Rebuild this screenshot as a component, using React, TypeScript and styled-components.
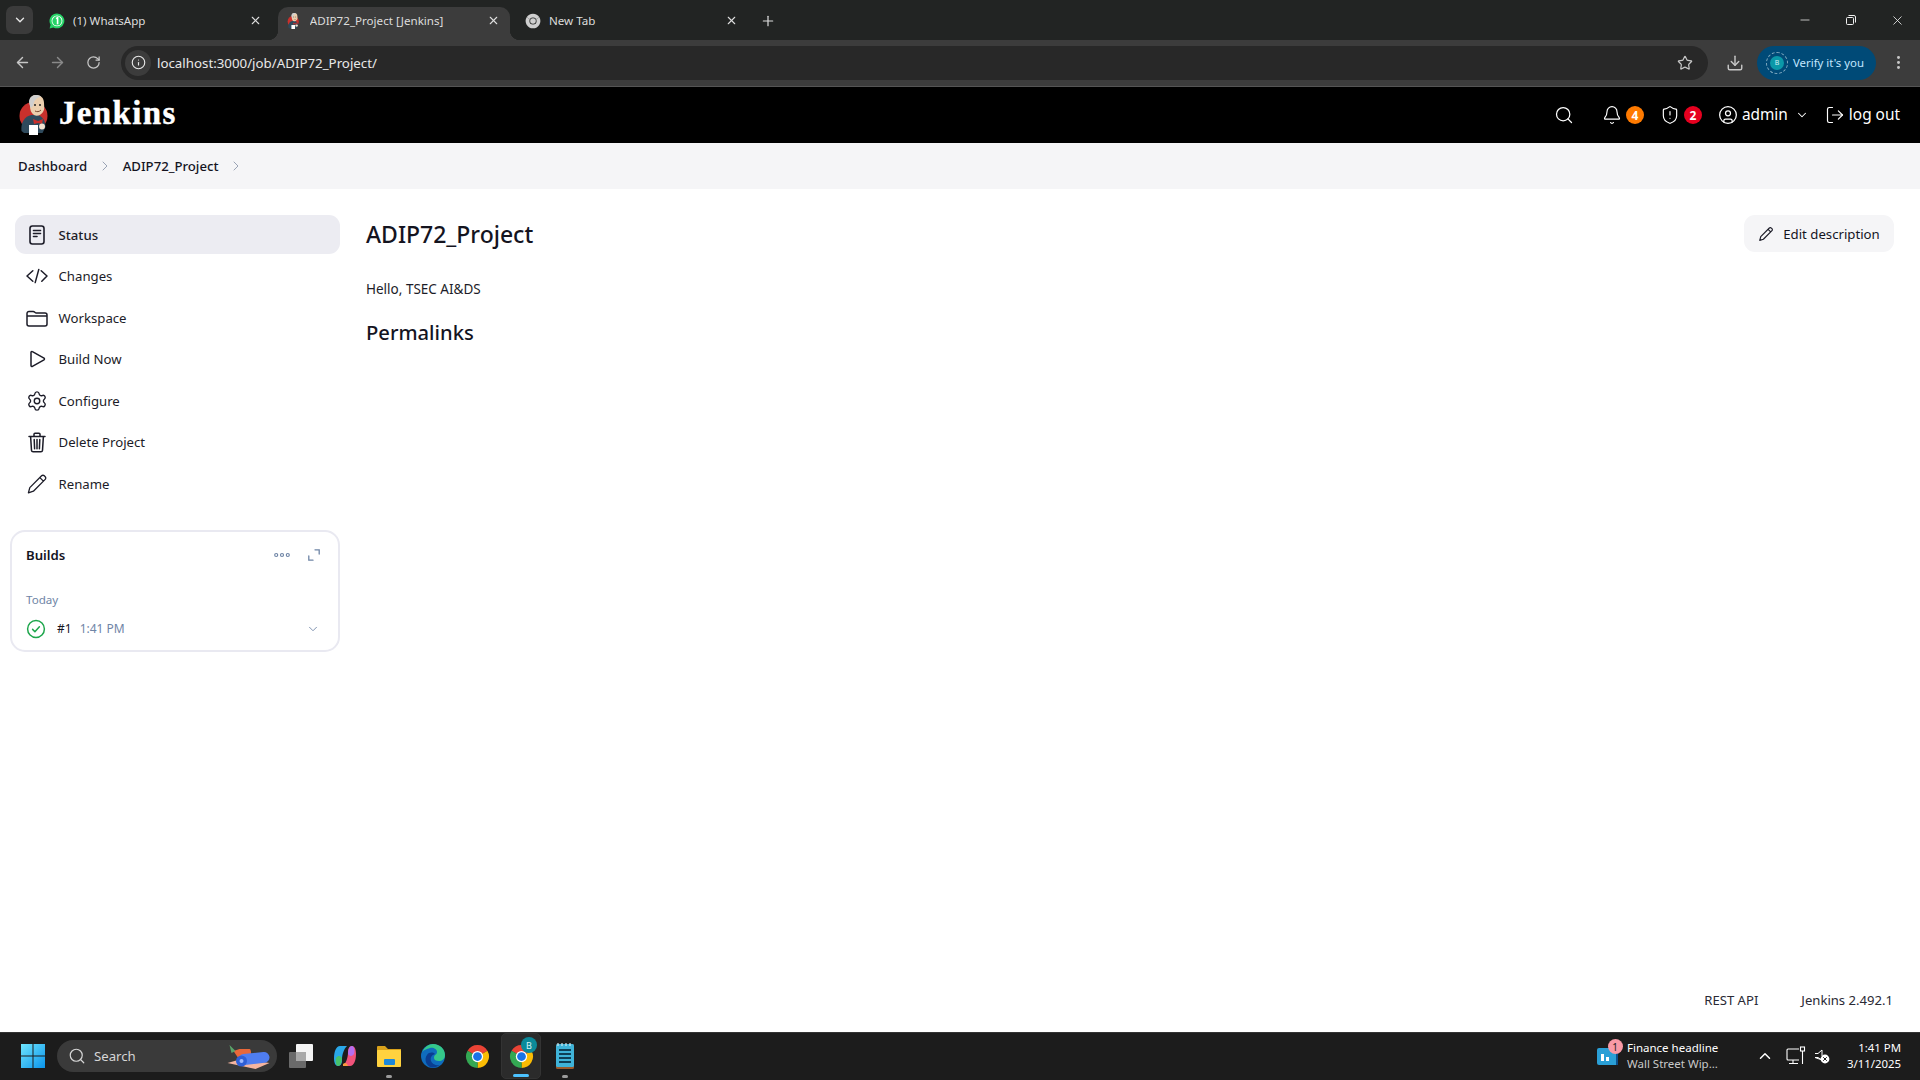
import React from "react";
import styled, { createGlobalStyle } from "styled-components";
import {
  Search, Bell, ShieldAlert, CircleUser, ChevronDown, LogOut, ChevronRight, Settings,
  ArrowLeft, ArrowRight, RotateCw, Info, Star, Download, EllipsisVertical, X, Plus, Minus, ChevronUp,
} from "lucide-react";

const UI = `"Noto Sans", "Open Sans", "Liberation Sans", sans-serif`;

const Global = createGlobalStyle`
  html, body { margin: 0; padding: 0; height: 100%; overflow: hidden; background: #fff; }
  #root { height: 100%; }
  * { box-sizing: border-box; }
  svg { display: block; flex: none; }
`;

const Page = styled.div`
  height: 100vh; display: flex; flex-direction: column; font-family: ${UI}; color: #14141f;
`;

/* ---------- browser chrome ---------- */
const TabStrip = styled.div`
  height: 40px; flex: none; background: #222423; display: flex; align-items: flex-end; padding-left: 6px; color: #dedede;
`;
const TabListButton = styled.div`
  width: 27px; height: 28px; margin: 0 7px 6px 0; background: #3b3b3b; border-radius: 7px;
  display: flex; align-items: center; justify-content: center; color: #e6e6e6;
`;
const Tab = styled.div<{ $active?: boolean }>`
  position: relative; width: ${(p) => (p.$active ? 232 : 238)}px; margin-right: ${(p) => (p.$active ? 6 : 0)}px; height: 33px;
  display: flex; align-items: center; padding: 0 ${(p) => (p.$active ? 10 : 16)}px 6px 9px; gap: ${(p) => (p.$active ? 10 : 8)}px;
  border-radius: 10px 10px 0 0; background: ${(p) => (p.$active ? "#3c3c3c" : "transparent")};
  ${(p) => p.$active && `
    &::before, &::after { content: ""; position: absolute; bottom: 0; width: 10px; height: 10px; }
    &::before { left: -10px; background: radial-gradient(circle at 0 0, #222423 10px, #3c3c3c 10.5px); }
    &::after { right: -10px; background: radial-gradient(circle at 100% 0, #222423 10px, #3c3c3c 10.5px); }
  `}
`;
const TabTitle = styled.span`
  flex: 1; font-size: 11.6px; white-space: nowrap; overflow: hidden; color: #dcdcdc;
`;
const NewTab = styled.div`
  margin: 0 0 11px 6px; color: #dedede; display: flex;
`;
const WindowControls = styled.div`
  margin-left: auto; align-self: stretch; display: flex; align-items: center; color: #f0f0f0;
`;
const WindowButton = styled.div`
  width: 46px; height: 40px; display: flex; align-items: center; justify-content: center;
`;
const Toolbar = styled.div`
  height: 47px; flex: none; background: #3c3c3c; border-bottom: 1px solid #555; display: flex; align-items: center;
  padding: 0 0 1px 13px; color: #c7c7c7;
`;
const NavButton = styled.div<{ $dim?: boolean }>`
  width: 18px; margin-right: 17.5px; display: flex; justify-content: center; color: ${(p) => (p.$dim ? "#8a8a8a" : "#c7c7c7")};
`;
const AddressBar = styled.div`
  flex: 1; height: 34px; margin-left: 1.5px; background: #282828; border-radius: 17px; display: flex; align-items: center;
  padding: 0 15px 0 4px; color: #e8e8e8;
`;
const SiteInfo = styled.div`
  width: 26px; height: 26px; border-radius: 50%; background: #3c3c3c; display: flex; align-items: center; justify-content: center;
  margin-right: 6px;
`;
const Url = styled.span`
  font-size: 13.3px; flex: 1; color: #e8e8e8;
`;
const ToolActions = styled.div`
  width: 212px; flex: none; display: flex; align-items: center; padding-left: 18px;
`;
const VerifyPill = styled.div`
  width: 119px; height: 34px; margin-left: 13px; border-radius: 17px; background: #004a77; color: #c2e7ff; display: flex; align-items: center;
  gap: 6px; padding-left: 10px; font-size: 11.4px; white-space: nowrap;
`;
const ProfileDot = styled.span`
  width: 20px; height: 20px; border-radius: 50%; background: #0b98a8; border: 3px solid #004a77; outline: 1px dashed #7fa9c0;
  color: #cfeff2; font-size: 7px; display: flex; align-items: center; justify-content: center; flex: none;
`;
const MenuDots = styled.div`
  margin-left: 14px; color: #c7c7c7;
`;

/* ---------- jenkins header ---------- */
const Header = styled.header`
  height: 56px; flex: none; background: #000; color: #fff; display: flex; align-items: center; padding: 0 20px 0 18px;
`;
const Brand = styled.div`
  display: flex; align-items: center; gap: 9px;
`;
const BrandName = styled.span`
  font-family: "Liberation Serif", serif; font-weight: 700; font-size: 33px; letter-spacing: 1.35px; color: #fff; line-height: 1;
  -webkit-text-stroke: 0.4px #fff; padding-bottom: 3px;
`;
const HeaderActions = styled.div`
  margin-left: auto; display: flex; align-items: center;
`;
const HeaderIconGroup = styled.div<{ $gap?: number }>`
  display: flex; align-items: center; margin-left: ${(p) => p.$gap ?? 0}px; gap: 4px;
`;
const Badge = styled.span<{ $color: string }>`
  width: 18px; height: 18px; border-radius: 50%; background: ${(p) => p.$color}; color: #fff; font-size: 12px; font-weight: 700;
  display: flex; align-items: center; justify-content: center;
`;
const HeaderText = styled.span`
  font-size: 15.4px; line-height: 1; color: #fff;
`;

const Crumbs = styled.nav`
  height: 46px; flex: none; background: #f5f5f7; display: flex; align-items: center; padding-left: 18px; font-weight: 500; color: #14141f;
`;
const Crumb = styled.span`
  font-size: 13.2px;
`;
const CrumbSep = styled.span`
  color: #9aa3b5; margin: 0 10px 0 9.5px; display: flex;
`;

/* ---------- main ---------- */
const Main = styled.main`
  flex: 1; display: flex; padding: 26px 26px 0 15px; min-height: 0;
`;
const Side = styled.aside`
  width: 325px; flex: none; display: flex; flex-direction: column;
`;
const TaskList = styled.div`
  display: flex; flex-direction: column; gap: 2.6px;
`;
const Task = styled.div<{ $active?: boolean }>`
  height: 39px; border-radius: 11px; display: flex; align-items: center; gap: 10.5px; padding-left: 11px;
  background: ${(p) => (p.$active ? "#ececf2" : "transparent")}; font-size: 13.2px; font-weight: ${(p) => (p.$active ? 500 : 400)};
  color: #1c1c28;
`;
const BuildCard = styled.section`
  margin: 26px 0 0 -5px; width: 330px; height: 122px; border: 2px solid #e9e9f1; border-radius: 15px; padding: 0 14px;
  display: flex; flex-direction: column;
`;
const CardHead = styled.div`
  height: 46px; display: flex; align-items: center; gap: 18px; padding-right: 4px; color: #6f85a6;
`;
const CardTitle = styled.h2`
  margin: 0 auto 0 0; font-size: 13.2px; font-weight: 600; color: #14141f;
`;
const Today = styled.div`
  margin-top: 13px; font-size: 11.6px; line-height: 18px; color: #6f85a6;
`;
const BuildRow = styled.div`
  margin-top: 10px; display: flex; align-items: center; font-size: 12px; padding-right: 4px;
`;
const BuildNum = styled.span`
  margin-left: 11px; color: #14141f;
`;
const BuildTime = styled.span`
  margin: 0 auto 0 8px; color: #6f85a6;
`;
const Content = styled.div`
  flex: 1; margin-left: 26px;
`;
const TitleRow = styled.div`
  height: 37px; display: flex; align-items: center; justify-content: space-between;
`;
const Title = styled.h1`
  margin: 0; padding-top: 2px; font-size: 23px; font-weight: 500; color: #14141f; line-height: 1;
`;
const EditButton = styled.div`
  width: 150px; height: 37px; border-radius: 11px; background: #f5f5f7; display: flex; align-items: center; justify-content: center; gap: 9px;
  font-size: 13.2px; color: #14141f;
`;
const Description = styled.p`
  margin: 27px 0 0; font-size: 13.5px; line-height: 20px; color: #1c1c28;
`;
const SubTitle = styled.h2`
  margin: 18px 0 0; font-size: 20.2px; font-weight: 500; line-height: 30px; color: #14141f;
`;
const Footer = styled.footer`
  height: 62px; flex: none; display: flex; align-items: center; justify-content: flex-end; gap: 43px; padding: 0 27px 2px 0; font-size: 13.1px; color: #2a2a35;
`;

/* ---------- taskbar ---------- */
const Taskbar = styled.div`
  height: 48px; flex: none; background: #1c1c1c; border-top: 1px solid #333; display: flex; align-items: center; padding: 0 0 1px 21px; color: #fff;
`;
const SearchPill = styled.div`
  width: 220px; height: 32px; margin-left: 12px; border-radius: 16px; background: #3a3a3a; display: flex; align-items: center; padding: 0 4px 0 11px; gap: 8px;
  font-size: 13.2px; color: #d6d6d6;
`;
const SearchLabel = styled.span`
  flex: 1;
`;
const TaskApps = styled.div`
  display: flex; align-items: center; margin-left: 2px;
`;
const AppSlot = styled.div<{ $w?: number; $active?: boolean }>`
  position: relative; width: ${(p) => p.$w ?? 44}px; height: 46px; display: flex; align-items: center; justify-content: center;
  ${(p) => p.$active && `background: #2b2b2b; border-radius: 5px; border: 1px solid #333; margin-left: 2px;`}
`;
const RunDot = styled.span<{ $active?: boolean }>`
  position: absolute; bottom: 1px; left: 50%; transform: translateX(-50%); height: 3px; border-radius: 2px;
  width: ${(p) => (p.$active ? 16 : 6)}px; background: ${(p) => (p.$active ? "#4cc2ff" : "#9b9b9b")};
`;
const AppBadge = styled.span`
  position: absolute; top: 3px; right: 3px; width: 16px; height: 16px; border-radius: 50%; background: #0b8a9a; color: #d8f4f7;
  font-size: 9px; display: flex; align-items: center; justify-content: center;
`;
const Tray = styled.div`
  margin-left: auto; display: flex; align-items: center; padding-right: 19px;
`;
const Widget = styled.div`
  position: relative; display: flex; align-items: center; gap: 8px; width: 159px;
`;
const WidgetBadge = styled.span`
  position: absolute; left: 10.5px; top: -1px; width: 15px; height: 15px; border-radius: 50%; background: #f99aa6; color: #1c1c1c; font-size: 10px;
  display: flex; align-items: center; justify-content: center;
`;
const WidgetText = styled.div`
  display: flex; flex-direction: column; font-size: 11.5px; line-height: 16px; white-space: nowrap; color: #fff;
`;
const WidgetSub = styled.span`
  color: #c9c9c9;
`;
const TrayIcons = styled.div`
  display: flex; align-items: center; gap: 8px; color: #fff;
`;
const Caret = styled.span`
  margin-right: 4px; display: flex;
`;
const Clock = styled.div`
  width: 71px; text-align: right; font-size: 11.4px; line-height: 16px; color: #fff; white-space: nowrap;
`;

/* ---------- drawings ---------- */
const JenkinsLogo = ({ size = 34 }: { size?: number }) => (
  <svg width={size * 0.8} height={size} viewBox="0 0 32 40">
    <circle cx="15.5" cy="21" r="14" fill="#c9302c" />
    <path d="M3.5 36c-1-8 3-15 10-16h6c5 1 8 6 8 12l-3 6H6z" fill="#2f4a5c" />
    <path d="M12 5c0-3 3-5 6-5 5 0 8 3 8 8 0 3 1 6-1 9-2 3-6 5-9 3-3-2-4-5-4-9z" fill="#eccfae" />
    <path d="M11 7c0-4 3-7 7-7 2 0 4 .5 5 2-3 0-6 2-7 5l-1 4-2 2c-1-2-2-4-2-6z" fill="#cfcfcf" />
    <path d="M15 24l5 2 5-2-1 5-4-1-4 1z" fill="#c9302c" />
    <path d="M11 30h9v10h-9z" fill="#fff" />
    <circle cx="24" cy="31.5" r="3" fill="#f0e2cf" />
    <circle cx="17" cy="10" r="1" fill="#222" /><circle cx="22" cy="10" r="1" fill="#222" />
    <path d="M17 16c2 1 4 1 6-1" stroke="#7a4b33" strokeWidth="1" fill="none" />
  </svg>
);
const ChromeLogo = ({ size = 16, ring = false }: { size?: number; ring?: boolean }) => (
  <svg width={size} height={size} viewBox="0 0 24 24">
    <path d="M12 12L2.47 6.5A11 11 0 0 1 21.53 6.5z" fill={ring ? "#cfcfcf" : "#ea4335"} />
    <path d="M12 12L21.53 6.5A11 11 0 0 1 12 23z" fill={ring ? "#cfcfcf" : "#fbbc04"} />
    <path d="M12 12L12 23A11 11 0 0 1 2.47 6.5z" fill={ring ? "#cfcfcf" : "#34a853"} />
    <circle cx="12" cy="12" r="5.4" fill={ring ? "#222423" : "#fff"} />
    <circle cx="12" cy="12" r="4.2" fill={ring ? "#cfcfcf" : "#1a73e8"} />
  </svg>
);
const WhatsAppLogo = () => (
  <svg width="16" height="16" viewBox="0 0 16 16">
    <path d="M8 .5a7.4 7.4 0 0 0-6.4 11.2L.6 15.4l3.8-1A7.4 7.4 0 1 0 8 .5z" fill="#25d366" />
    <circle cx="8" cy="7.9" r="5.4" fill="#fff" />
    <circle cx="8" cy="7.9" r="4.6" fill="#25d366" />
    <path d="M7 5.6l1.6-1v6.6" stroke="#fff" strokeWidth="1.6" fill="none" />
  </svg>
);
const StatusIcon = () => (
  <svg width="22" height="22" viewBox="0 0 22 22" fill="none" stroke="#1c1c28" strokeWidth="1.6" strokeLinecap="round" strokeLinejoin="round">
    <rect x="4" y="2" width="14" height="18" rx="2.4" />
    <path d="M7.5 6.5h7M7.5 9.5h7M7.5 12.5h3.5" />
  </svg>
);
const CodeIcon = () => (
  <svg width="22" height="22" viewBox="0 0 22 22" fill="none" stroke="#1c1c28" strokeWidth="1.5" strokeLinecap="round" strokeLinejoin="round">
    <path d="M6.8 5.8L1 11l5.8 5.2M15.2 5.8L21 11l-5.2 5.2M12.8 4.4L9.2 17.6" />
  </svg>
);
const FolderIcon = () => (
  <svg width="22" height="22" viewBox="0 0 22 22" fill="none" stroke="#1c1c28" strokeWidth="1.5" strokeLinejoin="round">
    <path d="M1 6.4A2 2 0 0 1 3 4.4h4.2c1.6 0 1.6 1.6 3.2 1.6H19a2 2 0 0 1 2 2V17a2 2 0 0 1-2 2H3a2 2 0 0 1-2-2z" />
    <path d="M1 9h20" />
  </svg>
);
const PlayIcon = () => (
  <svg width="22" height="22" viewBox="0 0 22 22" fill="none" stroke="#1c1c28" strokeWidth="1.5" strokeLinejoin="round">
    <path d="M5 4.4c0-.8.8-1.2 1.4-.8l11.6 6.6c.6.4.6 1.2 0 1.6L6.4 18.4c-.6.4-1.4 0-1.4-.8z" />
  </svg>
);
const TrashIcon = () => (
  <svg width="22" height="22" viewBox="0 0 22 22" fill="none" stroke="#1c1c28" strokeWidth="1.5" strokeLinecap="round" strokeLinejoin="round">
    <path d="M4.6 5.4l.9 14a1.6 1.6 0 0 0 1.6 1.4h7.8a1.6 1.6 0 0 0 1.6-1.4l.9-14M3 5.4h16M8 5.4V3.2a1 1 0 0 1 1-1h4a1 1 0 0 1 1 1v2.2M8.2 8.6l.4 9.2M11 8.6v9.2M13.8 8.6l-.4 9.2" />
  </svg>
);
const PencilIcon = ({ size = 22 }: { size?: number }) => (
  <svg width={size} height={size} viewBox="0 0 22 22" fill="none" stroke="#1c1c28" strokeWidth={size < 20 ? 1.6 : 1.3} strokeLinecap="round" strokeLinejoin="round">
    <path d="M2.4 19.8l1.4-5.2L15.6 2.8a1.9 1.9 0 0 1 2.7 0l.9.9a1.9 1.9 0 0 1 0 2.7L7.4 18.2zM13.9 4.6l3.5 3.5" />
  </svg>
);
const CheckBadge = () => (
  <svg width="20" height="20" viewBox="0 0 20 20" fill="none" stroke="#1ea64c" strokeWidth="1.5" strokeLinecap="round" strokeLinejoin="round">
    <circle cx="10" cy="10" r="8.4" />
    <path d="M6.6 10.4l2.3 2.3 4.5-5" />
  </svg>
);
const Dots = () => (
  <svg width="16" height="6" viewBox="0 0 16 6" fill="none" stroke="#6f85a6" strokeWidth="1.2">
    <circle cx="2.2" cy="3" r="1.5" /><circle cx="8" cy="3" r="1.5" /><circle cx="13.8" cy="3" r="1.5" />
  </svg>
);
const Expand = () => (
  <svg width="12" height="12" viewBox="0 0 12 12" fill="none" stroke="#6f85a6" strokeWidth="1.3" strokeLinecap="round">
    <path d="M7 .8h4.2V5M.8 7v4.2H5" />
  </svg>
);
const RestoreIcon = () => (
  <svg width="10" height="10" viewBox="0 0 10 10" fill="none" stroke="currentColor" strokeWidth="1">
    <rect x=".5" y="2.5" width="7" height="7" rx="1" />
    <path d="M2.5 .5H8a1.5 1.5 0 0 1 1.5 1.5v5.5" />
  </svg>
);
const WinLogo = () => (
  <svg width="24" height="24" viewBox="0 0 24 24">
    <defs>
      <linearGradient id="win" x1="0" y1="0" x2="1" y2="1"><stop offset="0" stopColor="#6fe6ff" /><stop offset="1" stopColor="#0a93ea" /></linearGradient>
    </defs>
    <path d="M0 0h11.5v11.5H0zM12.5 0H24v11.5H12.5zM0 12.5h11.5V24H0zM12.5 12.5H24V24H12.5z" fill="url(#win)" />
  </svg>
);
const SearchArt = () => (
  <svg width="49" height="30" viewBox="0 0 46 30">
    <path d="M2 22l14-4 28 4-14 6z" fill="#f5b5a0" />
    <path d="M8 10l6-2h10c2 0 2 8 0 8H12z" fill="#e8683a" />
    <path d="M4 4l6 6-4 2z" fill="#5aa56a" />
    <rect x="13" y="12" width="31" height="11" rx="5.5" fill="#4f7df0" transform="rotate(-6 28 17)" />
    <circle cx="16" cy="20" r="5.5" fill="#2f5fd6" />
    <circle cx="16" cy="20" r="2" fill="#9db8ff" />
  </svg>
);
const TaskViewIcon = () => (
  <svg width="24" height="24" viewBox="0 0 24 24">
    <rect x="0" y="8" width="17" height="16" rx="1" fill="#6a6a6a" />
    <rect x="7" y="0" width="17" height="17" rx="1" fill="#f4f4f4" />
    <rect x="7" y="8" width="10" height="9" fill="#a9a9a9" />
  </svg>
);
const CopilotIcon = () => (
  <svg width="22" height="24" viewBox="0 0 22 24">
    <path d="M6 2h7c-3 3-5 8-5 14 0 3-1 6-4 6-3 0-4-4-4-8C0 8 2 2 6 2z" fill="#2aa7e8" />
    <path d="M2 14c2-3 5-2 6 0 0 3-1 8-4 8-2 0-3-4-2-8z" fill="#47c26b" />
    <path d="M16 22H9c3-3 5-8 5-14 0-3 1-6 4-6 3 0 4 4 4 8 0 6-2 12-6 12z" fill="#f0527a" />
    <path d="M20 10c-2 3-5 2-6 0 0-3 1-8 4-8 2 0 3 4 2 8z" fill="#b56ef0" />
    <path d="M9 20c2-2 4-1 5 2H9z" fill="#f79a3e" />
  </svg>
);
const ExplorerIcon = () => (
  <svg width="24" height="24" viewBox="0 0 24 24">
    <path d="M0 3a1 1 0 0 1 1-1h7l3 3h13v3H0z" fill="#d9a21b" />
    <rect x="0" y="6" width="24" height="17" rx="1" fill="#ffd23f" />
    <rect x="7" y="15" width="11" height="6" rx="1" fill="#1e88d8" />
  </svg>
);
const EdgeIcon = () => (
  <svg width="24" height="24" viewBox="0 0 24 24">
    <circle cx="12" cy="12" r="12" fill="#0f6cbd" />
    <path d="M1 9C3 3 8 0 12 0c7 0 12 5 12 11 0 4-3 6-6 6-3 0-5-1-5-3 0-4 3-3 3-6S12 3 9 4 2 6 1 9z" fill="#35c88a" />
    <path d="M9 23c-4-2-6-8-3-12 2-3 6-3 8-1-3 1-5 3-4 7 1 3 5 5 9 4-3 2-7 3-10 2z" fill="#0a3d91" />
  </svg>
);
const NotepadIcon = () => (
  <svg width="18" height="26" viewBox="0 0 18 26">
    <rect x="0" y="1" width="18" height="25" rx="1.5" fill="#9a5a2c" />
    <rect x="0" y="1" width="18" height="23" rx="1.5" fill="#3fb3d8" />
    <path d="M3 7h12M3 11h12M3 15h12M3 19h12" stroke="#0e3f56" strokeWidth="1.8" />
    <path d="M2 0v3M6 0v3M10 0v3M14 0v3" stroke="#cfe9f2" strokeWidth="1.2" />
  </svg>
);
const WidgetIcon = () => (
  <svg width="22" height="22" viewBox="0 0 22 22">
    <rect x="0" y="3" width="21" height="17" rx="2" fill="#2a9fd6" />
    <path d="M4 9v7h3V9zM9 12v4h3v-4z" fill="#fff" />
    <rect x="19" y="8" width="2" height="12" fill="#0d4e8a" />
  </svg>
);
const NetworkIcon = () => (
  <svg width="20" height="20" viewBox="0 0 20 20" fill="none" stroke="#fff" strokeWidth="1.1">
    <path d="M13 3H2a1 1 0 0 0-1 1v9a1 1 0 0 0 1 1h11M7 14v3M3 17.5h9" />
    <rect x="14.5" y="1" width="4" height="4" /><path d="M16.5 5v13" />
  </svg>
);
const MuteIcon = () => (
  <svg width="16" height="16" viewBox="0 0 16 16">
    <path d="M1 5.5h3L8 2v6M8 12L4 9.5H1z" fill="none" stroke="#fff" strokeWidth="1" />
    <circle cx="11" cy="11" r="4.4" fill="#fff" />
    <path d="M9.2 9.2l3.6 3.6M12.8 9.2l-3.6 3.6" stroke="#1c1c1c" strokeWidth="1" />
  </svg>
);

const tasks: { label: string; icon: React.ReactNode; active?: boolean }[] = [
  { label: "Status", icon: <StatusIcon />, active: true },
  { label: "Changes", icon: <CodeIcon /> },
  { label: "Workspace", icon: <FolderIcon /> },
  { label: "Build Now", icon: <PlayIcon /> },
  { label: "Configure", icon: <Settings size={22} strokeWidth={1.5} /> },
  { label: "Delete Project", icon: <TrashIcon /> },
  { label: "Rename", icon: <PencilIcon /> },
];

export default function App() {
  return (
    <Page>
      <Global />
      <TabStrip>
        <TabListButton><ChevronDown size={14} strokeWidth={2.4} /></TabListButton>
        <Tab>
          <WhatsAppLogo />
          <TabTitle>(1) WhatsApp</TabTitle>
          <X size={13} strokeWidth={2} />
        </Tab>
        <Tab $active>
          <JenkinsLogo size={16} />
          <TabTitle>ADIP72_Project [Jenkins]</TabTitle>
          <X size={13} strokeWidth={2} />
        </Tab>
        <Tab>
          <ChromeLogo ring />
          <TabTitle>New Tab</TabTitle>
          <X size={13} strokeWidth={2} />
        </Tab>
        <NewTab><Plus size={16} strokeWidth={1.8} /></NewTab>
        <WindowControls>
          <WindowButton><Minus size={14} strokeWidth={1.3} /></WindowButton>
          <WindowButton><RestoreIcon /></WindowButton>
          <WindowButton><X size={15} strokeWidth={1.3} /></WindowButton>
        </WindowControls>
      </TabStrip>
      <Toolbar>
        <NavButton><ArrowLeft size={17} strokeWidth={2} /></NavButton>
        <NavButton $dim><ArrowRight size={17} strokeWidth={2} /></NavButton>
        <NavButton><RotateCw size={15} strokeWidth={2} /></NavButton>
        <AddressBar>
          <SiteInfo><Info size={15} strokeWidth={1.8} /></SiteInfo>
          <Url>localhost:3000/job/ADIP72_Project/</Url>
          <Star size={16} strokeWidth={1.8} color="#c7c7c7" />
        </AddressBar>
        <ToolActions>
          <Download size={18} strokeWidth={1.9} />
          <VerifyPill><ProfileDot>B</ProfileDot>Verify it's you</VerifyPill>
          <MenuDots><EllipsisVertical size={17} strokeWidth={2.2} /></MenuDots>
        </ToolActions>
      </Toolbar>

      <Header>
        <Brand>
          <JenkinsLogo size={40} />
          <BrandName>Jenkins</BrandName>
        </Brand>
        <HeaderActions>
          <Search size={20} strokeWidth={1.5} />
          <HeaderIconGroup $gap={28}>
            <Bell size={20} strokeWidth={1.4} />
            <Badge $color="#ff7a00">4</Badge>
          </HeaderIconGroup>
          <HeaderIconGroup $gap={16}>
            <ShieldAlert size={20} strokeWidth={1.4} />
            <Badge $color="#e6001f">2</Badge>
          </HeaderIconGroup>
          <HeaderIconGroup $gap={16}>
            <CircleUser size={20} strokeWidth={1.5} />
            <HeaderText>admin</HeaderText>
          </HeaderIconGroup>
          <HeaderIconGroup $gap={7}><ChevronDown size={14} strokeWidth={1.8} /></HeaderIconGroup>
          <HeaderIconGroup $gap={16}>
            <LogOut size={20} strokeWidth={1.4} />
            <HeaderText>log out</HeaderText>
          </HeaderIconGroup>
        </HeaderActions>
      </Header>

      <Crumbs>
        <Crumb>Dashboard</Crumb>
        <CrumbSep><ChevronRight size={16} strokeWidth={1.5} /></CrumbSep>
        <Crumb>ADIP72_Project</Crumb>
        <CrumbSep><ChevronRight size={16} strokeWidth={1.5} /></CrumbSep>
      </Crumbs>

      <Main>
        <Side>
          <TaskList>
            {tasks.map((t) => (
              <Task key={t.label} $active={t.active}>
                {t.icon}
                <span>{t.label}</span>
              </Task>
            ))}
          </TaskList>
          <BuildCard>
            <CardHead>
              <CardTitle>Builds</CardTitle>
              <Dots />
              <Expand />
            </CardHead>
            <Today>Today</Today>
            <BuildRow>
              <CheckBadge />
              <BuildNum>#1</BuildNum>
              <BuildTime>1:41 PM</BuildTime>
              <ChevronDown size={14} strokeWidth={1.5} color="#6f85a6" />
            </BuildRow>
          </BuildCard>
        </Side>
        <Content>
          <TitleRow>
            <Title>ADIP72_Project</Title>
            <EditButton><PencilIcon size={16} />Edit description</EditButton>
          </TitleRow>
          <Description>Hello, TSEC AI&amp;DS</Description>
          <SubTitle>Permalinks</SubTitle>
        </Content>
      </Main>

      <Footer>
        <span>REST API</span>
        <span>Jenkins 2.492.1</span>
      </Footer>

      <Taskbar>
        <WinLogo />
        <SearchPill>
          <Search size={18} strokeWidth={1.6} />
          <SearchLabel>Search</SearchLabel>
          <SearchArt />
        </SearchPill>
        <TaskApps>
          <AppSlot><TaskViewIcon /></AppSlot>
          <AppSlot><CopilotIcon /></AppSlot>
          <AppSlot><ExplorerIcon /><RunDot /></AppSlot>
          <AppSlot><EdgeIcon /></AppSlot>
          <AppSlot><ChromeLogo size={25} /></AppSlot>
          <AppSlot $active $w={40}><ChromeLogo size={25} /><AppBadge>B</AppBadge><RunDot $active /></AppSlot>
          <AppSlot $w={48}><NotepadIcon /><RunDot /></AppSlot>
        </TaskApps>
        <Tray>
          <Widget>
            <WidgetIcon />
            <WidgetBadge>1</WidgetBadge>
            <WidgetText>
              <span>Finance headline</span>
              <WidgetSub>Wall Street Wip...</WidgetSub>
            </WidgetText>
          </Widget>
          <TrayIcons>
            <Caret><ChevronUp size={18} strokeWidth={2} /></Caret>
            <NetworkIcon />
            <MuteIcon />
          </TrayIcons>
          <Clock>1:41 PM<br />3/11/2025</Clock>
        </Tray>
      </Taskbar>
    </Page>
  );
}
